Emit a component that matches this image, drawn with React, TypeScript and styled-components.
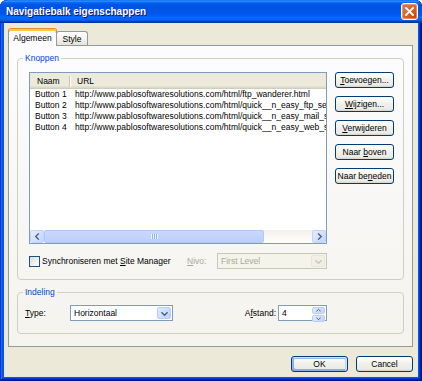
import React, { FC, ReactNode } from 'react';
import styled, { createGlobalStyle } from 'styled-components';

const GlobalStyle = createGlobalStyle`
  *, *::before, *::after {
    box-sizing: border-box;
  }

  html, body {
    margin: 0;
    padding: 0;
    background: #ffffff;
  }

  body {
    font-family: 'Liberation Sans', Arial, sans-serif;
    font-size: 8.5px;
    color: #000000;
  }
`;

const Styled = {
  Window: styled.div`
    display: flex;
    flex-direction: column;

    width: 422px;
    height: 381px;

    background: #0055ea;
    border-radius: 7px 7px 0 0;
    box-shadow: inset -1px -1px #00138c, inset 1px 1px #0831d9, inset -2px -2px #001ea0, inset 2px 2px #166aee,
      inset -3px -3px #003bda, inset 3px 3px #0855dd;
    overflow: hidden;
  `,
  TitleBar: styled.div`
    display: flex;
    align-items: center;
    justify-content: space-between;

    height: 23px;
    padding: 0 4px 0 6px;

    background: linear-gradient(
      to bottom,
      #0058ee 0%,
      #3a93ff 4%,
      #288eff 6%,
      #127dff 8%,
      #036ffc 10%,
      #0262ee 14%,
      #0057e5 20%,
      #0054e3 24%,
      #0055eb 56%,
      #005bf5 66%,
      #026afe 76%,
      #0062ef 86%,
      #0052d6 92%,
      #0040ab 94%,
      #003092 100%
    );
    border-radius: 7px 7px 0 0;
  `,
  Title: styled.span`
    font-size: 10px;
    font-weight: bold;
    color: #ffffff;
    text-shadow: 1px 1px #0f1089;
  `,
  CloseButton: styled.div`
    display: flex;
    align-items: center;
    justify-content: center;

    width: 17px;
    height: 17px;

    border: 1px solid #ffffff;
    border-radius: 3px;
    background: radial-gradient(circle at 90% 90%, #cc4600 0%, #dc6527 55%, #cd7546 70%),
      linear-gradient(#e9825c, #c24417);
    box-shadow: inset 0 0 0 1px rgba(255, 180, 150, 0.5);
  `,
  Client: styled.div`
    display: flex;
    flex-direction: column;
    flex: 1;

    margin: 0 4px 4px;
    padding: 5px 5px 0 4px;

    background: #ece9d8;
  `,
  TabStrip: styled.div`
    display: flex;
    align-items: flex-end;

    height: 17px;
  `,
  Tab: styled.div<{ $active?: boolean }>`
    position: relative;
    z-index: ${(p) => (p.$active ? 1 : 0)};

    display: flex;
    align-items: center;
    justify-content: center;

    width: ${(p) => (p.$active ? '49px' : '32px')};
    height: ${(p) => (p.$active ? '18px' : '14px')};
    margin-bottom: ${(p) => (p.$active ? '-1px' : '0')};
    margin-left: ${(p) => (p.$active ? '0' : '-1px')};
    padding-top: ${(p) => (p.$active ? '1px' : '0')};

    border: 1px solid #919b9c;
    border-bottom: none;
    border-top-color: ${(p) => (p.$active ? '#e68b2c' : '#919b9c')};
    border-radius: 3px 3px 0 0;
    background: ${(p) => (p.$active ? '#fcfcfe' : 'linear-gradient(#ffffff, #f3f3ef 50%, #e4e2d8)')};
    box-shadow: ${(p) => (p.$active ? 'inset 0 2px #ffc83c' : 'none')};
  `,
  Panel: styled.div`
    display: flex;
    flex-direction: column;

    height: 302px;
    padding: 7px 8px 0;

    border: 1px solid #919b9c;
    background: linear-gradient(to bottom, #fcfcfe, #f4f3ee);
  `,
  Group: styled.fieldset`
    margin: 0;
    padding: 0;
    min-width: 0;

    border: 1px solid #d0d0bf;
    border-radius: 4px;

    & + & {
      margin-top: 7px;
    }
  `,
  Legend: styled.legend`
    margin-left: 5px;
    padding: 0 2px;

    line-height: 11px;
    color: #0046d5;
  `,
  GroupBody: styled.div<{ $pad: string }>`
    padding: ${(p) => p.$pad};
  `,
  ListRow: styled.div`
    display: flex;
    gap: 8px;
  `,
  ListView: styled.div`
    display: flex;
    flex-direction: column;

    width: 298px;
    height: 172px;

    border: 1px solid #7f9db9;
    background: #ffffff;
  `,
  ListHeader: styled.div`
    display: flex;
    align-items: center;
    flex-shrink: 0;

    height: 16px;

    background: #ebeadb;
    box-shadow: inset 0 -1px #d0cdbd, inset 0 -2px #dcd9c9, inset 0 -3px #e4e1d2;
  `,
  HeaderCell: styled.div<{ $width?: number }>`
    width: ${(p) => (p.$width ? `${p.$width}px` : 'auto')};
    padding: 0 0 1px 7px;
    white-space: nowrap;
  `,
  HeaderSep: styled.div`
    width: 1px;
    height: 11px;
    background: #c7c5b2;
    box-shadow: 1px 0 #ffffff;
  `,
  Rows: styled.div`
    flex: 1;
    overflow: hidden;
  `,
  Row: styled.div`
    display: flex;
    height: 11px;
    line-height: 11px;
    white-space: nowrap;
  `,
  Cell: styled.div<{ $width?: number }>`
    flex-shrink: 0;
    width: ${(p) => (p.$width ? `${p.$width}px` : 'auto')};
    padding-left: 5px;
  `,
  ScrollBar: styled.div`
    display: flex;
    flex-shrink: 0;

    height: 13px;

    background: linear-gradient(to bottom, #f3f1ec, #fefefb);
  `,
  ScrollArrow: styled.div`
    display: flex;
    align-items: center;
    justify-content: center;

    width: 14px;
    height: 13px;

    border: 1px solid #c3d3fd;
    border-radius: 2px;
    background: linear-gradient(135deg, #e5edfd, #c2d3fc);
  `,
  Thumb: styled.div`
    display: flex;
    align-items: center;
    justify-content: center;

    width: 220px;
    height: 13px;

    border: 1px solid #b4c8f6;
    border-radius: 2px;
    background: linear-gradient(to bottom, #c9d8fc, #bccffb);
  `,
  Grip: styled.span`
    width: 7px;
    height: 5px;
    background: repeating-linear-gradient(to right, #eef4fe 0 1px, #8cb0f8 1px 2px);
  `,
  Track: styled.div`
    flex: 1;
  `,
  SideButtons: styled.div`
    display: flex;
    flex-direction: column;
    gap: 8px;
  `,
  Button: styled.div<{ $width: number; $default?: boolean }>`
    display: flex;
    align-items: center;
    justify-content: center;

    width: ${(p) => p.$width}px;
    height: 16px;
    padding: 0;

    border: 1px solid #003c74;
    border-radius: 3px;
    background: linear-gradient(180deg, #ffffff, #f0f0ea 50%, #ecebe6 86%, #d6d0c5);
    box-shadow: ${(p) =>
      p.$default
        ? 'inset -1px 1px #cee7ff, inset 1px 2px #98b8ea, inset -2px 2px #bcd4f6, inset 1px -1px #89ade4, inset 2px -2px #89ade4'
        : 'none'};
    white-space: nowrap;
  `,
  OptionsRow: styled.div`
    display: grid;
    grid-template-columns: 158px 30px 110px;
    align-items: center;

    margin-top: 9px;
  `,
  CheckLabel: styled.label`
    display: flex;
    align-items: center;
    gap: 2px;
    white-space: nowrap;
  `,
  CheckBox: styled.span`
    width: 11px;
    height: 11px;

    border: 1px solid #1c5180;
    background: linear-gradient(135deg, #dcdcd7, #ffffff);
  `,
  Label: styled.span<{ $disabled?: boolean; $end?: boolean }>`
    justify-self: ${(p) => (p.$end ? 'end' : 'start')};
    padding-right: ${(p) => (p.$end ? '2px' : '0')};
    color: ${(p) => (p.$disabled ? '#aca899' : '#000000')};
    white-space: nowrap;
  `,
  Combo: styled.div<{ $disabled?: boolean }>`
    display: flex;
    align-items: center;

    height: 16px;
    padding: 1px;

    border: 1px solid ${(p) => (p.$disabled ? '#c9c7ba' : '#7f9db9')};
    background: ${(p) => (p.$disabled ? '#f5f4ea' : '#ffffff')};
  `,
  ComboText: styled.span<{ $disabled?: boolean }>`
    flex: 1;
    padding-left: 2px;
    color: ${(p) => (p.$disabled ? '#aca899' : '#000000')};
    white-space: nowrap;
  `,
  DropButton: styled.div<{ $disabled?: boolean }>`
    display: flex;
    align-items: center;
    justify-content: center;

    width: 14px;
    height: 100%;

    border: 1px solid ${(p) => (p.$disabled ? '#e8e6dc' : '#b9cdf8')};
    border-radius: 2px;
    background: ${(p) => (p.$disabled ? '#f1efe6' : 'linear-gradient(135deg, #e3ecfe, #bccffb)')};
  `,
  SpinButtons: styled.div`
    display: flex;
    flex-direction: column;
    gap: 1px;

    width: 13px;
    height: 100%;
  `,
  SpinPart: styled.div`
    display: flex;
    align-items: center;
    justify-content: center;
    flex: 1;

    border: 1px solid #b9cdf8;
    border-radius: 2px;
    background: linear-gradient(135deg, #e3ecfe, #c2d4fb);
  `,
  LayoutRow: styled.div`
    display: grid;
    grid-template-columns: 45px 103px 105px 49px;
    align-items: center;
  `,
  Footer: styled.div`
    display: flex;
    justify-content: flex-end;
    gap: 8px;

    margin-top: 9px;
  `,
  Key: styled.span`
    text-decoration: underline;
    text-underline-offset: 1px;
  `,
};

const Chevron: FC<{ dir: 'left' | 'right' | 'up' | 'down'; color?: string; size?: number }> = ({
  dir,
  color = '#4d6185',
  size = 7,
}) => {
  const points = {
    left: '5,1 2,4 5,7',
    right: '3,1 6,4 3,7',
    up: '1,5 4,2 7,5',
    down: '1,3 4,6 7,3',
  }[dir];

  return (
    <svg width={size} height={size} viewBox="0 0 8 8">
      <polyline points={points} fill="none" stroke={color} strokeWidth={1.6} strokeLinecap="square" />
    </svg>
  );
};

const CloseIcon: FC = () => (
  <svg width="9" height="9" viewBox="0 0 9 9">
    <path d="M1 1 L8 8 M8 1 L1 8" stroke="#ffffff" strokeWidth={1.8} strokeLinecap="square" />
  </svg>
);

const rows = [
  { name: 'Button 1', url: 'http://www.pablosoftwaresolutions.com/html/ftp_wanderer.html' },
  { name: 'Button 2', url: 'http://www.pablosoftwaresolutions.com/html/quick__n_easy_ftp_server.html' },
  { name: 'Button 3', url: 'http://www.pablosoftwaresolutions.com/html/quick__n_easy_mail_server.html' },
  { name: 'Button 4', url: 'http://www.pablosoftwaresolutions.com/html/quick__n_easy_web_server.html' },
];

// wraps the text in one span so flex parents keep the spaces around the mnemonic
function renderKey(before: string, key: string, after: string): ReactNode {
  return (
    <span>
      {before}
      <Styled.Key>{key}</Styled.Key>
      {after}
    </span>
  );
}

const App: FC = () => {
  return (
    <>
      <GlobalStyle />
      <Styled.Window>
        <Styled.TitleBar>
          <Styled.Title>Navigatiebalk eigenschappen</Styled.Title>
          <Styled.CloseButton>
            <CloseIcon />
          </Styled.CloseButton>
        </Styled.TitleBar>

        <Styled.Client>
          <Styled.TabStrip>
            <Styled.Tab $active>Algemeen</Styled.Tab>
            <Styled.Tab>Style</Styled.Tab>
          </Styled.TabStrip>

          <Styled.Panel>
            <Styled.Group>
              <Styled.Legend>Knoppen</Styled.Legend>
              <Styled.GroupBody $pad="8px 9px 10px 11px">
                <Styled.ListRow>
                  <Styled.ListView>
                    <Styled.ListHeader>
                      <Styled.HeaderCell $width={39}>Naam</Styled.HeaderCell>
                      <Styled.HeaderSep />
                      <Styled.HeaderCell>URL</Styled.HeaderCell>
                    </Styled.ListHeader>
                    <Styled.Rows>
                      {rows.map((row) => (
                        <Styled.Row key={row.name}>
                          <Styled.Cell $width={40}>{row.name}</Styled.Cell>
                          <Styled.Cell>{row.url}</Styled.Cell>
                        </Styled.Row>
                      ))}
                    </Styled.Rows>
                    <Styled.ScrollBar>
                      <Styled.ScrollArrow>
                        <Chevron dir="left" />
                      </Styled.ScrollArrow>
                      <Styled.Thumb>
                        <Styled.Grip />
                      </Styled.Thumb>
                      <Styled.Track />
                      <Styled.ScrollArrow>
                        <Chevron dir="right" />
                      </Styled.ScrollArrow>
                    </Styled.ScrollBar>
                  </Styled.ListView>

                  <Styled.SideButtons>
                    <Styled.Button $width={59}>{renderKey('', 'T', 'oevoegen...')}</Styled.Button>
                    <Styled.Button $width={59}>{renderKey('', 'W', 'ijzigen...')}</Styled.Button>
                    <Styled.Button $width={59}>{renderKey('', 'V', 'erwijderen')}</Styled.Button>
                    <Styled.Button $width={59}>{renderKey('Naar ', 'b', 'oven')}</Styled.Button>
                    <Styled.Button $width={59}>{renderKey('Naar be', 'n', 'eden')}</Styled.Button>
                  </Styled.SideButtons>
                </Styled.ListRow>

                <Styled.OptionsRow>
                  <Styled.CheckLabel>
                    <Styled.CheckBox />
                    <Styled.Label>{renderKey('Synchroniseren met ', 'S', 'ite Manager')}</Styled.Label>
                  </Styled.CheckLabel>
                  <Styled.Label $disabled>{renderKey('', 'N', 'ivo:')}</Styled.Label>
                  <Styled.Combo $disabled>
                    <Styled.ComboText $disabled>First Level</Styled.ComboText>
                    <Styled.DropButton $disabled>
                      <Chevron dir="down" color="#c9c7ba" />
                    </Styled.DropButton>
                  </Styled.Combo>
                </Styled.OptionsRow>
              </Styled.GroupBody>
            </Styled.Group>

            <Styled.Group>
              <Styled.Legend>Indeling</Styled.Legend>
              <Styled.GroupBody $pad="7px 0 12px 7px">
                <Styled.LayoutRow>
                  <Styled.Label>{renderKey('', 'T', 'ype:')}</Styled.Label>
                  <Styled.Combo>
                    <Styled.ComboText>Horizontaal</Styled.ComboText>
                    <Styled.DropButton>
                      <Chevron dir="down" />
                    </Styled.DropButton>
                  </Styled.Combo>
                  <Styled.Label $end>{renderKey('A', 'f', 'stand:')}</Styled.Label>
                  <Styled.Combo>
                    <Styled.ComboText>4</Styled.ComboText>
                    <Styled.SpinButtons>
                      <Styled.SpinPart>
                        <Chevron dir="up" size={5} />
                      </Styled.SpinPart>
                      <Styled.SpinPart>
                        <Chevron dir="down" size={5} />
                      </Styled.SpinPart>
                    </Styled.SpinButtons>
                  </Styled.Combo>
                </Styled.LayoutRow>
              </Styled.GroupBody>
            </Styled.Group>
          </Styled.Panel>

          <Styled.Footer>
            <Styled.Button $width={57} $default>
              OK
            </Styled.Button>
            <Styled.Button $width={57}>Cancel</Styled.Button>
          </Styled.Footer>
        </Styled.Client>
      </Styled.Window>
    </>
  );
};

export default App;
